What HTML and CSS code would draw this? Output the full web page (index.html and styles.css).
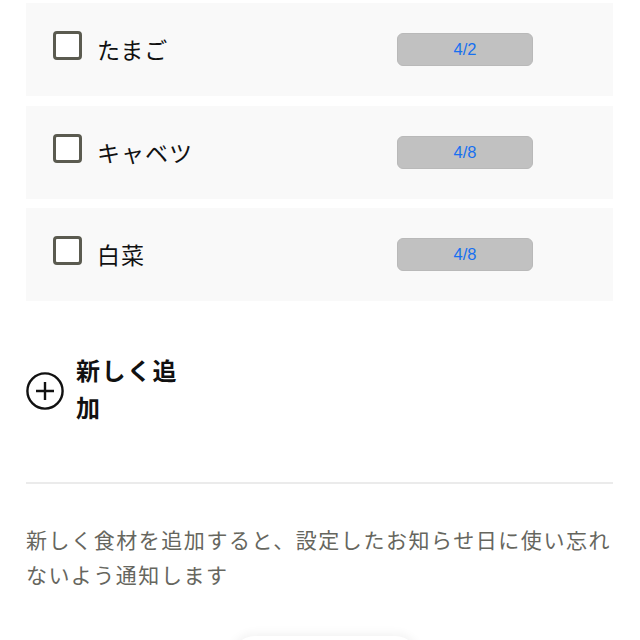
FILE: index.html
```html
<!DOCTYPE html>
<html lang="ja">
<head>
<meta charset="utf-8">
<link rel="stylesheet" href="styles.css">
</head>
<body>
<main class="page">
  <ul class="list">
    <li class="item">
      <span class="check"></span>
      <span class="name">たまご</span>
      <span class="date">4/2</span>
    </li>
    <li class="item">
      <span class="check"></span>
      <span class="name">キャベツ</span>
      <span class="date">4/8</span>
    </li>
    <li class="item">
      <span class="check"></span>
      <span class="name">白菜</span>
      <span class="date">4/8</span>
    </li>
  </ul>
  <div class="add">
    <svg class="add-icon" width="38" height="38" viewBox="0 0 38 38" aria-hidden="true">
      <circle cx="19" cy="19" r="17.6" fill="none" stroke="#111" stroke-width="2.4"/>
      <path d="M10 19H28M19 10V28" stroke="#111" stroke-width="2.4" fill="none"/>
    </svg>
    <span class="add-label">新しく追加</span>
  </div>
  <hr class="divider">
  <p class="note">新しく食材を追加すると、設定したお知らせ日に使い忘れないよう通知します</p>
  <div class="bottom-btn"></div>
</main>
</body>
</html>
```

FILE: styles.css
```css
* { box-sizing: border-box; }
html, body { margin: 0; padding: 0; background: #fff; }
body {
  font-family: "Noto Sans CJK JP", "Noto Sans", sans-serif;
  color: #111;
}
.page {
  padding: 3px 27px 0 26px;
}
.list {
  list-style: none;
  margin: 0;
  padding: 0;
  display: flex;
  flex-direction: column;
  gap: 9.5px;
}
.item {
  height: 93px;
  background: #f9f9f9;
  display: flex;
  align-items: center;
  padding-left: 27px;
  padding-right: 80px;
}
.check {
  width: 29px;
  height: 29px;
  border: 3px solid #5b5b50;
  border-radius: 4px;
  background: #fff;
  flex: none;
  margin-bottom: 8px;
}
.name {
  flex: 1;
  margin-left: 15px;
  font-size: 23px;
  letter-spacing: 1px;
  line-height: 1;
  color: #111;
}
.date {
  width: 136px;
  height: 33px;
  border-radius: 6px;
  background: #c1c1c1;
  border: 1px solid #b9b9b9;
  display: flex;
  align-items: center;
  justify-content: center;
  font-family: "Liberation Sans", Arial, sans-serif;
  font-size: 16.5px;
  color: #1770f0;
  flex: none;
}
.add {
  display: flex;
  align-items: center;
  margin-top: 50px;
}
.add-icon {
  flex: none;
  margin-top: 5px;
}
.add-label {
  margin-left: 12px;
  max-width: 112px;
  font-size: 24px;
  font-weight: 700;
  letter-spacing: 1.5px;
  line-height: 37px;
  color: #111;
}
.divider {
  border: none;
  height: 2px;
  background: #ebebeb;
  margin: 57px 0 0;
}
.note {
  margin: 38px 0 0;
  font-size: 21px;
  letter-spacing: 1.55px;
  line-height: 35px;
  color: #66665e;
}
.bottom-btn {
  width: 190px;
  height: 50px;
  margin: 44px 0 0 204px;
  border-radius: 25px;
  background: #fff;
  box-shadow: 0 -3px 10px rgba(0, 0, 0, 0.05);
}
```
